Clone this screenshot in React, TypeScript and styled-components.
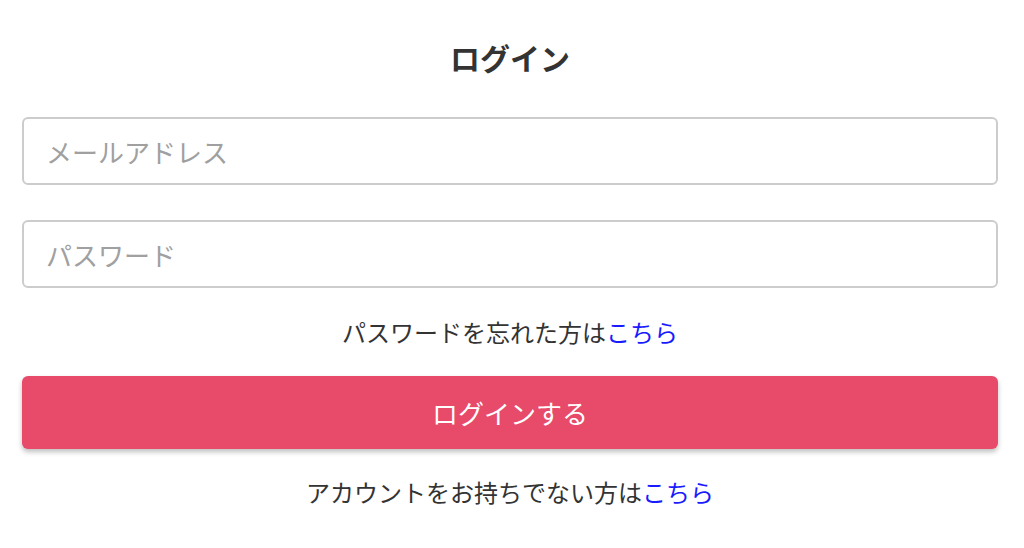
import * as React from 'react'
import styled, { createGlobalStyle } from 'styled-components'

const GlobalStyle = createGlobalStyle`
  html, body {
    margin: 0;
    padding: 0;
    background: #fff;
    font-family: "Noto Sans CJK JP", "Noto Sans", sans-serif;
  }
`

const Page = styled.div`
  display: flex;
  flex-direction: column;
  padding: 37px 26px 0 22px;
`

const Title = styled.h1`
  margin: 0;
  text-align: center;
  font-size: 30px;
  line-height: 40px;
  font-weight: 700;
  color: #333;
`

const Form = styled.form`
  display: flex;
  flex-direction: column;
  margin-top: 40px;
`

const Field = styled.input`
  box-sizing: border-box;
  width: 100%;
  height: 68px;
  padding: 0 22px;
  border: 2px solid #cccccc;
  border-radius: 6px;
  font-family: inherit;
  font-size: 26px;
  color: #333;
  outline: none;
  background: #fff;

  &::placeholder {
    color: #a0a0a0;
  }

  & + & {
    margin-top: 35px;
  }
`

const Note = styled.p<{ $top: number }>`
  margin: ${({ $top }) => $top}px 0 0;
  text-align: center;
  font-size: 24px;
  line-height: 36px;
  color: #333;
`

const Link = styled.a`
  color: #1a1aff;
  text-decoration: none;
`

const Submit = styled.button`
  margin-top: 26px;
  height: 73px;
  width: 100%;
  border: none;
  border-radius: 6px;
  background: #e84a6a;
  color: #fff;
  font-family: inherit;
  font-size: 26px;
  box-shadow: 0 3px 5px rgba(0, 0, 0, 0.25);
  cursor: pointer;
`

export default function App() {
  return (
    <>
      <GlobalStyle />
      <Page>
        <Title>ログイン</Title>
        <Form onSubmit={e => e.preventDefault()}>
          <Field type="email" placeholder="メールアドレス" />
          <Field type="password" placeholder="パスワード" />
          <Note $top={26}>
            パスワードを忘れた方は<Link href="#">こちら</Link>
          </Note>
          <Submit type="submit">ログインする</Submit>
          <Note $top={25}>
            アカウントをお持ちでない方は<Link href="#">こちら</Link>
          </Note>
        </Form>
      </Page>
    </>
  )
}
